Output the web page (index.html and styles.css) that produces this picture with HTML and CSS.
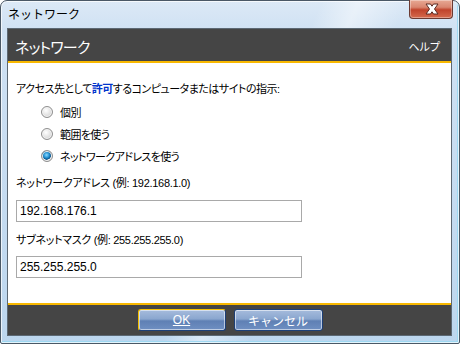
FILE: index.html
```html
<!DOCTYPE html>
<html lang="ja">
<head>
    <meta charset="UTF-8">
    <title>ネットワーク</title>
    <link rel="stylesheet" href="styles.css">
</head>
<body>
    <div class="window">
        <div class="titlebar">
            <span class="title">ネットワーク</span>
            <button class="close-button">
                <svg width="44" height="18" viewBox="0 0 44 18">
                    <path d="M16 4 H20.5 L22 6.2 L23.5 4 H28 L24.5 9 L28 14 H23.5 L22 11.8 L20.5 14 H16 L19.5 9 Z" fill="#fff" stroke="#5a2a22" stroke-width="1" stroke-linejoin="round"/>
                </svg>
            </button>
        </div>
        <div class="client">
            <div class="dialog-header">
                <span class="dialog-title">ネットワーク</span>
                <span class="help">ヘルプ</span>
            </div>
            <div class="dialog-body">
                <p class="intro">アクセス先として<b>許可</b>するコンピュータまたはサイトの指示:</p>
                <div class="radio-group">
                    <label class="radio-row"><span class="radio"></span>個別</label>
                    <label class="radio-row"><span class="radio"></span>範囲を使う</label>
                    <label class="radio-row"><span class="radio checked"></span>ネットワークアドレスを使う</label>
                </div>
                <p class="field-label first">ネットワークアドレス (例: 192.168.1.0)</p>
                <input class="field" type="text" value="192.168.176.1">
                <p class="field-label">サブネットマスク (例: 255.255.255.0)</p>
                <input class="field" type="text" value="255.255.255.0">
            </div>
            <div class="dialog-footer">
                <button class="glass-button default"><u>OK</u></button>
                <button class="glass-button">キャンセル</button>
            </div>
        </div>
    </div>
</body>
</html>
```

FILE: styles.css
```css
body {
    margin: 0;
    width: 460px;
    height: 344px;
    overflow: hidden;
    font-family: "Liberation Sans", "Noto Sans CJK JP", sans-serif;
    font-size: 11px;
    font-feature-settings: "palt";
    color: #000;
}
.window {
    box-sizing: border-box;
    width: 460px;
    height: 344px;
    border: 1px solid #4a5866;
    border-radius: 7px 7px 2px 2px;
    background:
        linear-gradient(115deg, rgba(255,255,255,0) 52%, rgba(255,255,255,0.45) 58%, rgba(255,255,255,0) 66%),
        linear-gradient(to bottom, #dce9f6 0, #cfe1f3 30px, #bcd6ee 100%);
    box-shadow: inset 0 0 0 1px rgba(255,255,255,0.7), inset -2px -2px 0 #9fd8f2;
    display: flex;
    flex-direction: column;
    padding: 0 7px 7px 6px;
}
.titlebar {
    height: 27px;
    display: flex;
    justify-content: space-between;
    align-items: flex-start;
}
.title {
    padding: 7px 0 0 1px;
    font-size: 12px;
    line-height: 14px;
    font-feature-settings: normal;
}
.close-button {
    width: 44px;
    height: 19px;
    margin: -1px -1px 0 0;
    padding: 0;
    border: 1px solid #6b3a32;
    border-top: none;
    border-radius: 0 0 4px 4px;
    background: linear-gradient(to bottom, #e7a994 0, #d98670 40%, #c0432b 55%, #d46a4d 100%);
    box-shadow: inset 0 0 0 1px rgba(255,255,255,0.35);
}
.close-button svg {
    display: block;
}
.client {
    flex: 1;
    display: flex;
    flex-direction: column;
    border: 1px solid #5c6873;
    background: #fff;
}
.dialog-header {
    height: 32px;
    background: #454545;
    border-bottom: 2px solid #f8b800;
    display: flex;
    justify-content: space-between;
    align-items: center;
    padding: 0 11px 0 7px;
    color: #fff;
}
.dialog-title {
    font-size: 15px;
    letter-spacing: -0.8px;
    padding-top: 2px;
}
.help {
    font-size: 11px;
    padding-top: 2px;
}
.dialog-body {
    flex: 1;
    padding: 18px 8px 0 8px;
}
.intro {
    margin: 0;
    line-height: 16px;
    letter-spacing: -0.5px;
}
.intro b {
    color: #0033cc;
}
.radio-group {
    display: flex;
    flex-direction: column;
    padding: 4px 0 0 25px;
}
.radio-row {
    height: 22px;
    display: flex;
    align-items: center;
    gap: 7px;
    letter-spacing: -0.6px;
}
.radio {
    box-sizing: border-box;
    width: 12px;
    height: 12px;
    border-radius: 50%;
    border: 1px solid #8f8f8f;
    background: radial-gradient(circle at 40% 35%, #ffffff 0, #e6e6e6 45%, #c8c8c8 100%);
    box-shadow: inset 0 0 0 1px #f4f4f4;
}
.radio.checked {
    background:
        radial-gradient(circle at 45% 40%, #8fd8ff 0, #1f8fd0 35%, #0b4f86 55%, transparent 60%),
        radial-gradient(circle at 40% 35%, #ffffff 0, #e6e6e6 45%, #c8c8c8 100%);
}
.field-label {
    margin: 10px 0 0;
    line-height: 16px;
    letter-spacing: -0.3px;
}
.field-label.first {
    margin-top: 8px;
}
.field {
    display: block;
    box-sizing: border-box;
    width: 286px;
    height: 22px;
    margin-top: 8px;
    padding: 0 3px;
    border: 1px solid #a9a9a9;
    font: inherit;
    font-size: 12px;
    color: #000;
}
.field-label.first + .field {
    margin-top: 9px;
}
.dialog-footer {
    height: 30px;
    background: #454545;
    border-top: 2px solid #f8b800;
    display: flex;
    justify-content: center;
    align-items: center;
    gap: 8px;
    padding-left: 1px;
}
.glass-button {
    box-sizing: border-box;
    width: 89px;
    height: 22px;
    border: 1px solid #1d3f76;
    border-radius: 3px;
    background: linear-gradient(to bottom, #a6bcdc 0, #8aa6cf 45%, #5f80b4 55%, #6f8fc2 100%);
    box-shadow: inset 0 0 0 1px rgba(255,255,255,0.55);
    color: #fff;
    font-family: inherit;
    font-size: 12px;
    padding: 0;
}
.glass-button.default {
    width: 88px;
    border-color: #f5c000 #1d3f76 #1d3f76 #f5c000;
}
```
